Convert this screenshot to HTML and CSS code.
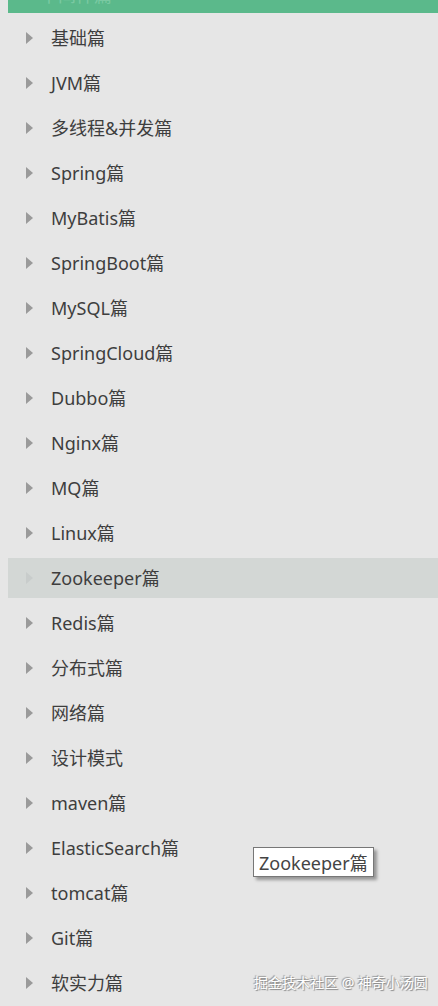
FILE: index.html
```html
<!DOCTYPE html>
<html>
<head>
<meta charset="utf-8">
<link rel="stylesheet" href="styles.css">
</head>
<body>
<div class="page">
  <div class="topbar"><span class="topbar-text">中间件篇</span></div>
  <ul class="menu">
    <li class="item"><span class="arrow"></span><span class="label">基础篇</span></li>
    <li class="item"><span class="arrow"></span><span class="label">JVM篇</span></li>
    <li class="item"><span class="arrow"></span><span class="label">多线程&amp;并发篇</span></li>
    <li class="item"><span class="arrow"></span><span class="label">Spring篇</span></li>
    <li class="item"><span class="arrow"></span><span class="label">MyBatis篇</span></li>
    <li class="item"><span class="arrow"></span><span class="label">SpringBoot篇</span></li>
    <li class="item"><span class="arrow"></span><span class="label">MySQL篇</span></li>
    <li class="item"><span class="arrow"></span><span class="label">SpringCloud篇</span></li>
    <li class="item"><span class="arrow"></span><span class="label">Dubbo篇</span></li>
    <li class="item"><span class="arrow"></span><span class="label">Nginx篇</span></li>
    <li class="item"><span class="arrow"></span><span class="label">MQ篇</span></li>
    <li class="item"><span class="arrow"></span><span class="label">Linux篇</span></li>
    <li class="item active"><span class="arrow"></span><span class="label">Zookeeper篇</span></li>
    <li class="item"><span class="arrow"></span><span class="label">Redis篇</span></li>
    <li class="item"><span class="arrow"></span><span class="label">分布式篇</span></li>
    <li class="item"><span class="arrow"></span><span class="label">网络篇</span></li>
    <li class="item"><span class="arrow"></span><span class="label">设计模式</span></li>
    <li class="item"><span class="arrow"></span><span class="label">maven篇</span></li>
    <li class="item"><span class="arrow"></span><span class="label">ElasticSearch篇</span></li>
    <li class="item"><span class="arrow"></span><span class="label">tomcat篇</span></li>
    <li class="item"><span class="arrow"></span><span class="label">Git篇</span></li>
    <li class="item"><span class="arrow"></span><span class="label">软实力篇</span></li>
  </ul>
  <div class="tooltip">Zookeeper篇</div>
  <div class="watermark">掘金技术社区 @ 神奇小汤圆</div>
</div>
</body>
</html>
```

FILE: styles.css
```css
html, body {
  margin: 0;
  padding: 0;
  background: #e6e6e6;
}
.page {
  position: relative;
  width: 438px;
  height: 1006px;
  overflow: hidden;
  background: #e6e6e6;
  font-family: "Noto Sans", "Noto Sans CJK SC", sans-serif;
}
.topbar {
  margin-left: 8px;
  height: 13px;
  background: #5bb98b;
  overflow: hidden;
  position: relative;
}
.topbar-text {
  position: absolute;
  left: 32px;
  top: -17px;
  font-size: 18px;
  line-height: 24px;
  color: #7ac9a2;
  white-space: nowrap;
}
.menu {
  list-style: none;
  margin: 0;
  padding: 5px 0 0 8px;
  display: flex;
  flex-direction: column;
  gap: 5px;
}
.item {
  height: 40px;
  display: flex;
  align-items: center;
}
.item.active {
  background: #d3d7d5;
}
.arrow {
  width: 0;
  height: 0;
  margin-left: 18px;
  border-top: 6px solid transparent;
  border-bottom: 6px solid transparent;
  border-left: 7px solid #9a9a9a;
}
.item.active .arrow {
  border-left-color: #c8cccb;
}
.label {
  margin-left: 18px;
  font-size: 18px;
  color: #3e3e3e;
  line-height: 1;
  margin-top: 0;
}
.tooltip {
  position: absolute;
  left: 253px;
  top: 847px;
  height: 28px;
  padding: 0 5px;
  display: flex;
  align-items: center;
  background: #ffffff;
  border: 1px solid #777;
  box-shadow: 3px 3px 3px rgba(0,0,0,0.35);
  font-size: 18px;
  color: #444;
  white-space: nowrap;
}
.watermark {
  position: absolute;
  left: 254px;
  top: 973px;
  font-size: 14px;
  line-height: 20px;
  color: #ffffff;
  text-shadow: 1px 1px 1px #888, -1px -1px 1px #999;
  white-space: nowrap;
}
```
